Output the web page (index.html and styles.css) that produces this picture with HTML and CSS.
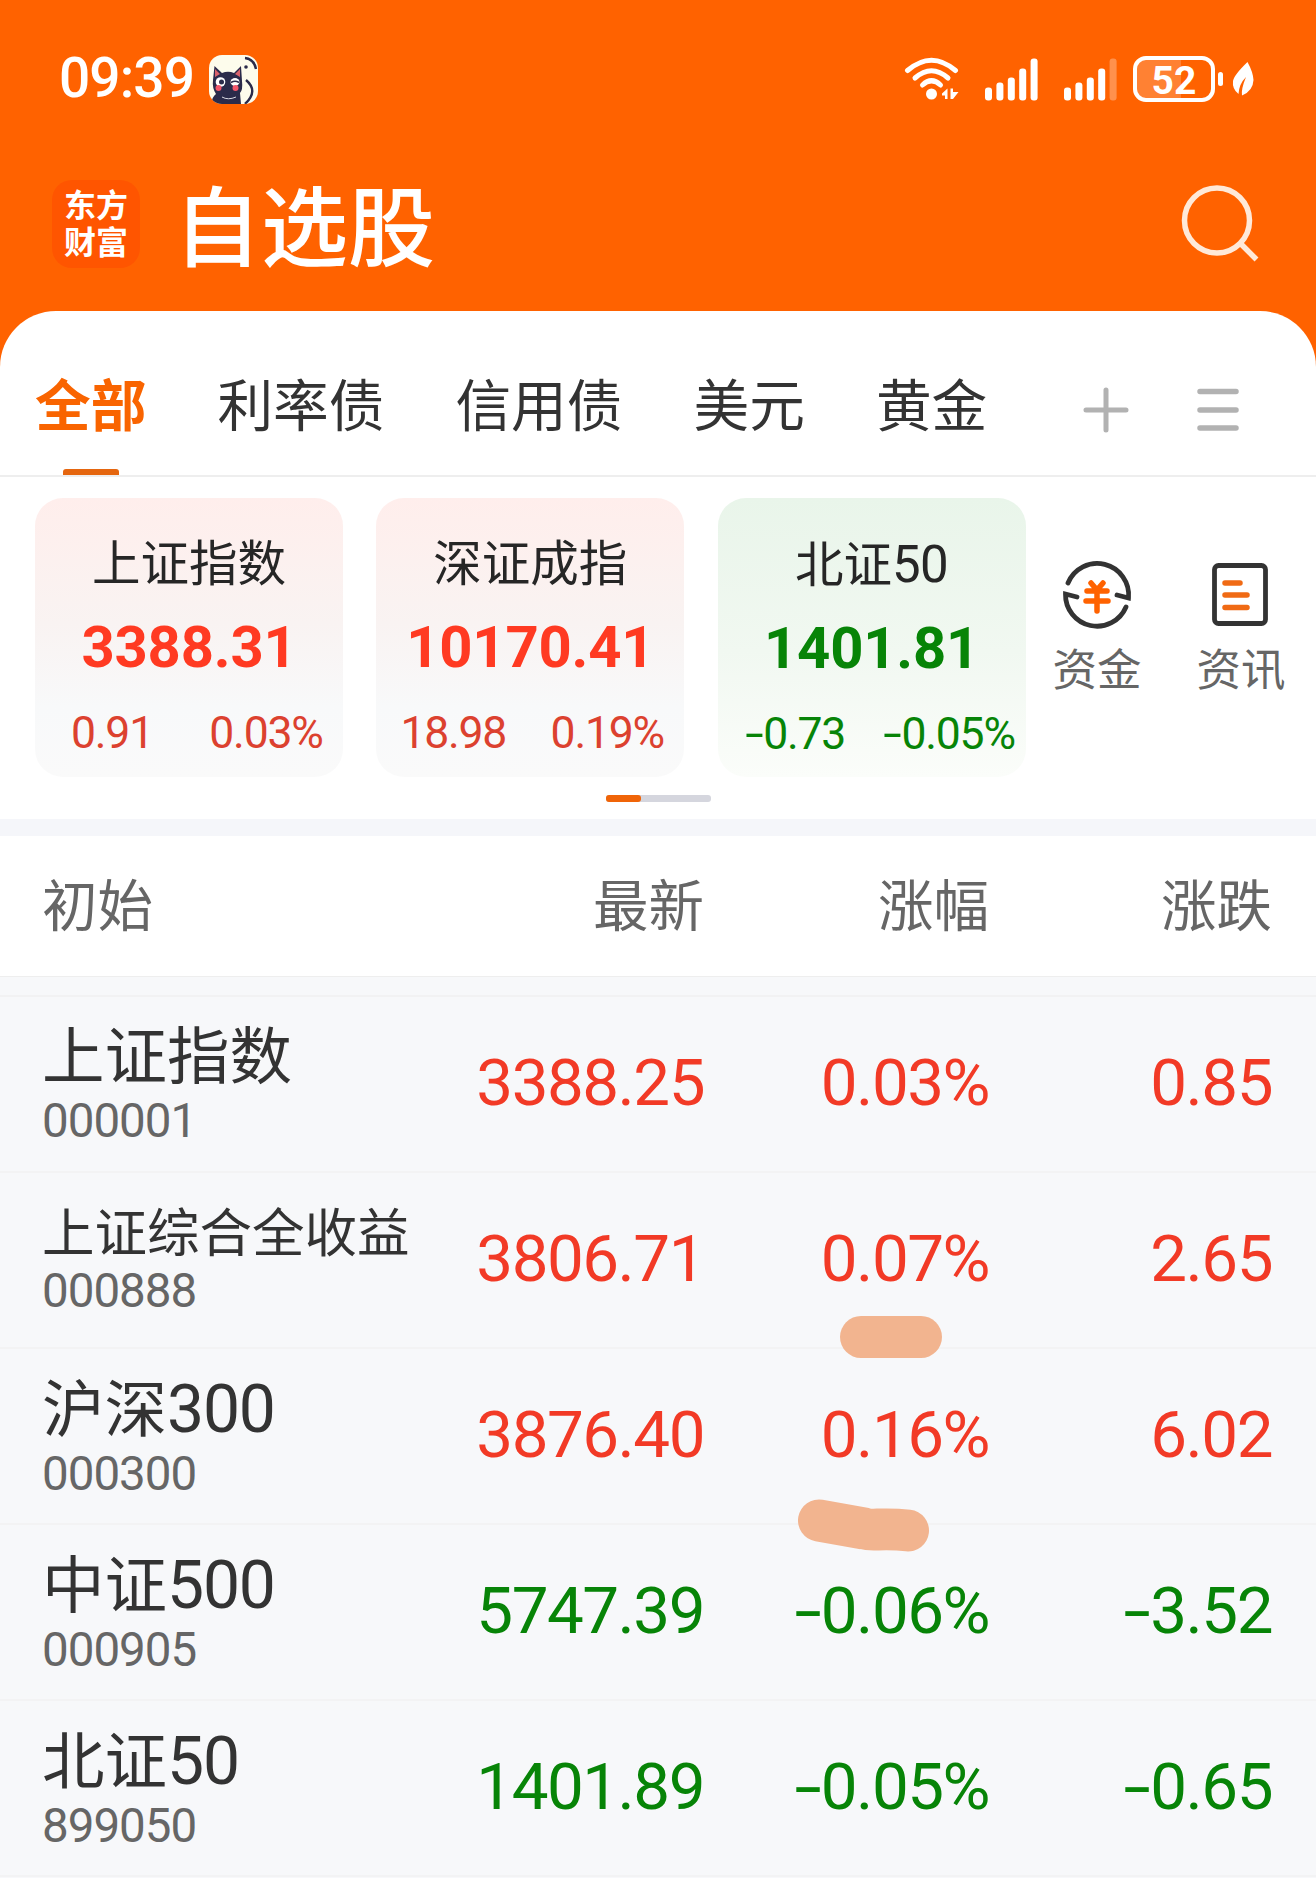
FILE: index.html
```html
<!DOCTYPE html>
<html lang="zh-CN">

<head>
  <meta charset="utf-8">
  <title>自选股</title>
  <link rel="stylesheet" href="styles.css">
</head>
<body>
<header class="top">
  <div class="status">
    <span class="time">09:39</span>
    <svg class="cat" width="49" height="49" viewBox="0 0 49 49">
      <clipPath id="round"><rect width="49" height="49" rx="13"/></clipPath>
      <g clip-path="url(#round)">
        <rect width="49" height="49" fill="#fdfcec"/>
        <path d="M2 49 Q3 42 7 39 Q3 33 4 25 L5.500 11 L13 18 Q19 15.500 25 18 L32 11 L33 26 Q34 35 31 38 L32 49Z" fill="#2b2b4a"/>
        <path d="M6 14 L11 19 L6 22Z M31 14 L26 19 L31 22Z" fill="#d8626b"/>
        <circle cx="11.500" cy="27" r="4.800" fill="#fff"/>
        <circle cx="12.500" cy="27" r="2.500" fill="#2b2b4a"/>
        <ellipse cx="26" cy="27" rx="4.500" ry="4" fill="#fff"/>
        <path d="M22 27.500 Q26 25 30 27.500" fill="none" stroke="#2b2b4a" stroke-width="1.500"/>
        <circle cx="9.500" cy="33" r="3" fill="#f2566a"/>
        <circle cx="26.500" cy="33" r="3" fill="#f2566a"/>
        <path d="M13 42 Q19 45.500 27 42" fill="none" stroke="#d8d8e0" stroke-width="1"/>
        <path d="M37 25 Q50 36 36 49 M36 3 Q45 4 47 14" fill="none" stroke="#2b2b4a" stroke-width="2.400"/>
        <circle cx="37" cy="12" r="1.800" fill="#2b2b4a"/>
      </g>
    </svg>
    <svg class="wifi" width="56" height="46" viewBox="0 0 56 46">
      <g fill="none" stroke="#fff" stroke-width="5" stroke-linecap="round">
        <path d="M3.500 14.500 Q27.500 -6 51.500 14.500"/>
        <path d="M11 22 Q27.500 7.500 44 22"/>
        <path d="M18.500 29 Q27.500 20.500 36.500 29"/>
      </g>
      <circle cx="27.500" cy="38" r="5.500" fill="#fff"/>
      <path d="M38 37.500 L43.500 32.500 V43 H41 V39.500 H38Z M46.500 32.500 H49 V36 H54.500 L49 43 H46.500Z" fill="#fff"/>
    </svg>
    <svg class="signal" width="53" height="43" viewBox="0 0 53 43" fill="#fff">
      <rect x="0" y="29.500" width="7" height="13" rx="3"/>
      <rect x="11.400" y="24.500" width="7" height="18" rx="3"/>
      <rect x="22.800" y="19.500" width="7" height="23" rx="3"/>
      <rect x="34.200" y="10.500" width="7" height="32" rx="3"/>
      <rect x="45.600" y="0.500" width="7" height="42" rx="3"/>
    </svg>
    <svg class="signal second" width="53" height="43" viewBox="0 0 53 43" fill="#fff">
      <rect x="0" y="29.500" width="7" height="13" rx="3"/>
      <rect x="11.400" y="24.500" width="7" height="18" rx="3"/>
      <rect x="22.800" y="19.500" width="7" height="23" rx="3"/>
      <rect x="34.200" y="10.500" width="7" height="32" rx="3"/>
      <rect x="45.600" y="0.500" width="7" height="42" rx="3" opacity="0.3"/>
    </svg>
    <span class="battery">52</span>
    <span class="nub"></span>
    <svg class="leaf" width="22" height="36" viewBox="0 0 22 36">
      <path d="M15.500 1 Q21 11 21.500 19 Q21 30 10 34.500 Q9 28 14 16 Q7 23 6.500 33 Q0 28 1 20 Q2 14 15.500 1Z" fill="#fff"/>
    </svg>
  </div>
  <div class="title-bar">
    <div class="logo">东方<br>财富</div>
    <h1>自选股</h1>
    <svg class="search" width="80" height="80" viewBox="0 0 80 80" fill="none" stroke="#ffe9d8" stroke-width="5.500">
      <circle cx="37" cy="36.500" r="32.500"/>
      <path d="M60 59 L76.500 75.500"/>
    </svg>
  </div>
</header>

<main class="sheet">
  <nav class="tabs">
    <span class="tab active">全部</span>
    <span class="tab">利率债</span>
    <span class="tab">信用债</span>
    <span class="tab">美元</span>
    <span class="tab">黄金</span>
    <svg class="plus" width="46" height="46" viewBox="0 0 46 46" stroke="#b2b2b2" stroke-width="5" stroke-linecap="round">
      <path d="M3 23 H43 M23 3 V43"/>
    </svg>
    <svg class="menu" width="42" height="46" viewBox="0 0 42 46" stroke="#b2b2b2" stroke-width="5.500" stroke-linecap="round">
      <path d="M3 4.500 H39 M3 23 H39 M3 41 H39"/>
    </svg>
  </nav>

  <section class="indexes">
    <div class="card up">
      <div class="card-name">上证指数</div>
      <div class="card-value">3388.31</div>
      <div class="card-change"><span>0.91</span><span>0.03%</span></div>
    </div>
    <div class="card up">
      <div class="card-name">深证成指</div>
      <div class="card-value">10170.41</div>
      <div class="card-change"><span>18.98</span><span>0.19%</span></div>
    </div>
    <div class="card down">
      <div class="card-name">北证<span class="num">50</span></div>
      <div class="card-value">1401.81</div>
      <div class="card-change"><span><i>-</i>0.73</span><span><i>-</i>0.05%</span></div>
    </div>
    <div class="tool">
      <svg width="72" height="72" viewBox="0 0 72 72" fill="none" stroke="#333" stroke-width="4.800" stroke-linecap="round" stroke-linejoin="miter">
        <path d="M7 24 A31.500 31.500 0 0 1 67.500 39 L56 36"/>
        <path d="M65 48 A31.500 31.500 0 0 1 4.500 35 L16 38"/>
        <path d="M30 24 L36 31 L42 24 M26 32 H46 M25 42 H47 M36 31 V52" stroke="#ff6200" stroke-width="5.500"/>
      </svg>
      <span>资金</span>
    </div>
    <div class="tool news">
      <svg width="72" height="72" viewBox="0 0 72 72" fill="none" stroke="#333" stroke-width="4.800">
        <rect x="9.500" y="6.500" width="51" height="58" rx="4"/>
        <path d="M20 24 H35 M20 36 H42 M20 48.500 H42" stroke="#f06a14" stroke-width="5.500" stroke-linecap="round"/>
      </svg>
      <span>资讯</span>
    </div>
  </section>
  <div class="pager"><span></span></div>
</main>

<div class="row head">
  <span>初始</span><span>最新</span><span>涨幅</span><span>涨跌</span>
</div>

<section class="list">
  <div class="row up">
    <div class="stock"><div class="name">上证指数</div><div class="code">000001</div></div>
    <span>3388.25</span><span>0.03%</span><span>0.85</span>
  </div>
  <div class="row up">
    <div class="stock"><div class="name long">上证综合全收益</div><div class="code">000888</div></div>
    <span>3806.71</span><span>0.07%</span><span>2.65</span>
    <svg class="mark first" width="102" height="42" viewBox="0 0 102 42">
      <path d="M21 21 H81"/>
    </svg>
  </div>
  <div class="row up">
    <div class="stock"><div class="name">沪深<span class="num">300</span></div><div class="code">000300</div></div>
    <span>3876.40</span><span>0.16%</span><span>6.02</span>
    <svg class="mark second" width="132" height="54" viewBox="0 0 132 54">
      <path d="M21 21.500 L66 29.500 Q71 31 80 30.500 Q97 30 110 31.500"/>
    </svg>
  </div>
  <div class="row down">
    <div class="stock"><div class="name">中证<span class="num">500</span></div><div class="code">000905</div></div>
    <span>5747.39</span><span><i>-</i>0.06%</span><span><i>-</i>3.52</span>
  </div>
  <div class="row down">
    <div class="stock"><div class="name">北证<span class="num">50</span></div><div class="code">899050</div></div>
    <span>1401.89</span><span><i>-</i>0.05%</span><span><i>-</i>0.65</span>
  </div>
</section>
</body>

</html>
```
FILE: styles.css
```css
* {
  box-sizing: border-box;
}
body {
  margin: 0;
  width: 1316px;
  height: 1878px;
  overflow: hidden;
  background-color: #f7f8fa;
  font-family: Roboto, "Noto Sans CJK SC", sans-serif;
  color: #333;
}
svg {
  display: block;
  flex: none;
}
i {
  display: inline-block;
  font-style: normal;
  width: 0.43em;
  text-align: center;
  transform: scaleX(1.5);
}

/* header */
.top {
  background-color: #ff6200;
  height: 371px;
}
.status {
  display: flex;
  align-items: center;
  height: 158px;
  padding: 0 62px 0 59px;
  color: #fff;
}
.time {
  font-size: 55px;
  font-weight: 500;
  letter-spacing: -0.9px;
  width: 150px;
  margin-top: -2px;
}
.wifi {
  margin-left: auto;
}
.signal {
  margin-left: 25px;
}
.signal.second {
  margin-left: 26px;
}
.battery {
  width: 82px;
  height: 46px;
  margin-left: 16px;
  border: 4px solid #fff;
  border-radius: 13px;
  background: linear-gradient(to right, rgba(255,255,255,0.2) 60%, transparent 60%);
  font-size: 39px;
  font-weight: bold;
  line-height: 42px;
  text-align: center;
}
.nub {
  width: 5px;
  height: 14px;
  margin: 0 9px 0 3px;
  border-radius: 3px;
  background-color: #fff;
}
.title-bar {
  display: flex;
  align-items: center;
  height: 132px;
  padding: 0 56px 0 52px;
}
.logo {
  width: 88px;
  height: 88px;
  padding-top: 8px;
  border-radius: 20px;
  background-color: #ff5500;
  color: #fff;
  font-size: 32px;
  font-weight: bold;
  line-height: 37px;
  text-align: center;
}
h1 {
  margin: 11px auto 0 34px;
  color: #fff;
  font-size: 87px;
  font-weight: 500;
  line-height: 100px;
}

/* tabs */
.sheet {
  margin-top: -60px;
  height: 525px;
  background-color: #fff;
  border-bottom: 17px solid #f5f6fa;
  border-radius: 56px 56px 0 0;
}
.tabs {
  display: flex;
  align-items: center;
  gap: 71px;
  height: 166px;
  padding: 30px 0 0 35px;
  border-bottom: 2px solid #eee;
}
.tab {
  position: relative;
  font-size: 55.7px;
  line-height: 133px;
  height: 134px;
}
.tab.active {
  color: #f96400;
  font-weight: bold;
}
.tab.active::after {
  content: "";
  position: absolute;
  left: 28px;
  bottom: 0;
  width: 56px;
  height: 6px;
  border-radius: 3px 3px 0 0;
  background-color: #e5660f;
}
.plus {
  margin: 3px 0 0 25px;
}
.menu {
  margin: 3px 0 0 -3px;
}

/* index cards */
.indexes {
  display: flex;
  height: 300px;
  padding: 21px 0 0 35px;
}
.card {
  flex: none;
  width: 308px;
  height: 279px;
  margin-right: 33.3px;
  padding-top: 35px;
  border-radius: 28px;
  text-align: center;
}
.card.up {
  background: linear-gradient(#ffeeec, #f9f3f2 45%, #f8f9fa 75%, #fafafa);
}
.card.down {
  background: linear-gradient(#e9f5ea, #f1f8f1 55%, #fbfdfa);
}
.card-name {
  color: #262626;
  font-size: 48.5px;
  line-height: 64px;
}
.card-name .num {
  font-size: 51px;
  letter-spacing: -0.5px;
}
.card-value {
  font-size: 58px;
  font-weight: bold;
  letter-spacing: -0.2px;
  line-height: 70px;
  margin-top: 15px;
}
.card-change {
  display: flex;
  font-size: 44.5px;
  letter-spacing: -1.2px;
  line-height: 54px;
  margin-top: 24px;
}
.card-change span {
  width: 50%;
  white-space: nowrap;
}
.up {
  color: #f23a26;
}
.down {
  color: #078407;
}
.card.up .card-value {
  color: #ff3a22;
}
.card.up .card-change {
  color: #dc412f;
}
.tool {
  flex: none;
  width: 90px;
  margin: 61px 54px 0 -7px;
  display: flex;
  flex-direction: column;
  align-items: center;
  color: #666;
  font-size: 44.5px;
  line-height: 80px;
  white-space: nowrap;
}
.tool.news {
  margin-left: 0;
}
.pager {
  width: 105px;
  height: 7px;
  margin: 18px auto 0;
  border-radius: 3px;
  background-color: #d5d6de;
}
.pager span {
  display: block;
  width: 35px;
  height: 7px;
  border-radius: 3px;
  background-color: #f06408;
}

/* quotes table */
.row {
  position: relative;
  display: grid;
  grid-template-columns: 381px 281px 285px 283px;
  align-items: center;
  height: 176px;
  padding-left: 42px;
  border-bottom: 2px solid #f3f3f4;
  font-size: 65.5px;
  letter-spacing: -1.5px;
}
.row > span {
  text-align: right;
  padding-bottom: 3px;
}
.row.head {
  height: 141px;
  padding-bottom: 6px;
  background-color: #fff;
  border-bottom: 1px solid #eee;
  color: #666;
  font-size: 55.5px;
  letter-spacing: 0;
}
.row.head > span:first-child {
  text-align: left;
}
.list {
  margin-top: 18px;
  border-top: 2px solid #f2f2f3;
}
.stock {
  letter-spacing: 0;
  white-space: nowrap;
}
.name {
  color: #333;
  font-size: 62.5px;
  line-height: 74px;
  padding-top: 2px;
  margin-bottom: -2px;
}
.name .num {
  font-size: 66px;
  letter-spacing: -1.2px;
}
.name.long {
  font-size: 52.5px;
  line-height: 62px;
}
.code {
  color: #666;
  font-size: 47.5px;
  letter-spacing: -1px;
  line-height: 56px;
}

/* highlighter strokes */
.mark {
  position: absolute;
  fill: none;
  stroke: #f2b48f;
  stroke-width: 42;
  stroke-linecap: round;
  z-index: 1;
}
.mark.first {
  left: 840px;
  top: 143px;
}
.mark.second {
  left: 798px;
  top: 150px;
}
```
